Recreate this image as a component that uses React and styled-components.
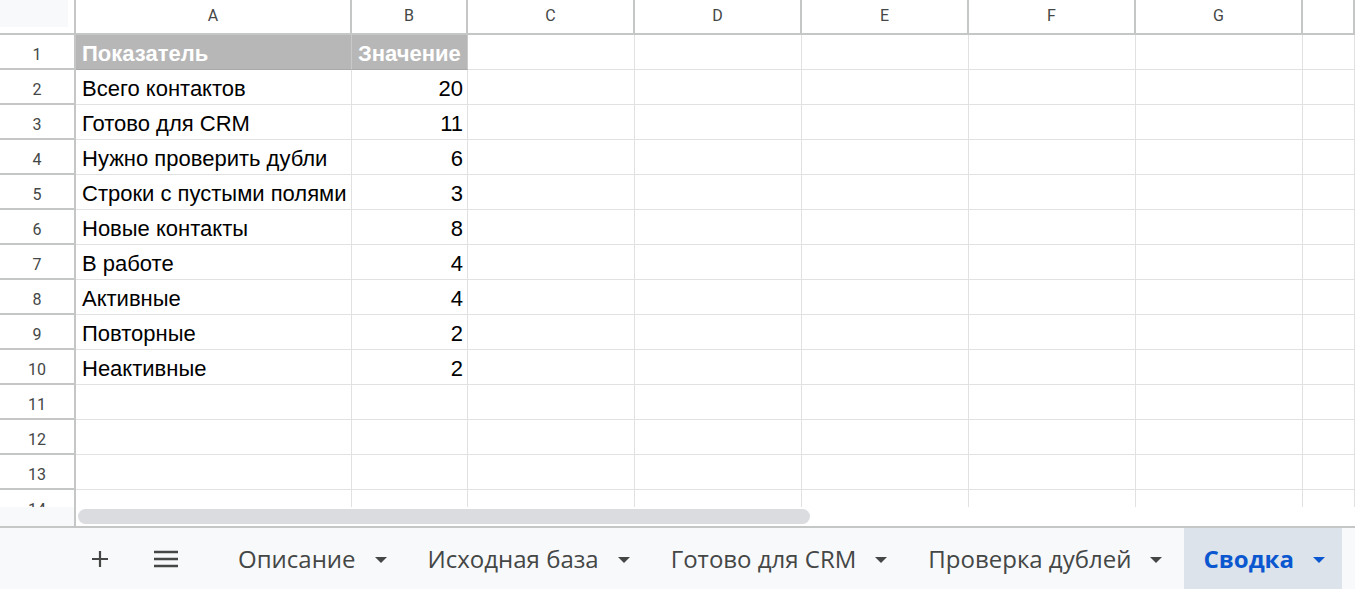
import React from "react";
import styled, { createGlobalStyle } from "styled-components";

const GlobalStyle = createGlobalStyle`
  html, body {
    margin: 0;
    padding: 0;
    background: #ffffff;
    overflow: hidden;
  }
  * { box-sizing: border-box; }
`;

const columns = ["A", "B", "C", "D", "E", "F", "G", ""];
const colTemplate = "76px 276px 116px 167px 167px 167px 167px 167px 1fr";

const rows = [
  ["Показатель", "Значение", true],
  ["Всего контактов", "20"],
  ["Готово для CRM", "11"],
  ["Нужно проверить дубли", "6"],
  ["Строки с пустыми полями", "3"],
  ["Новые контакты", "8"],
  ["В работе", "4"],
  ["Активные", "4"],
  ["Повторные", "2"],
  ["Неактивные", "2"],
  ["", ""],
  ["", ""],
  ["", ""],
  ["", ""],
];

const tabs = [
  { name: "Описание" },
  { name: "Исходная база" },
  { name: "Готово для CRM" },
  { name: "Проверка дублей" },
  { name: "Сводка", active: true },
];

export default function App() {
  return (
    <Page>
      <GlobalStyle />
      <Grid>
        <Row>
          <Corner>
            <CornerBox />
          </Corner>
          {columns.map((c, i) => (
            <ColHeader key={i}>{c}</ColHeader>
          ))}
        </Row>
        {rows.map(([label, value, head], i) => (
          <Row key={i}>
            <RowHeader>{i + 1}</RowHeader>
            <Cell $head={head}>{label}</Cell>
            <Cell $head={head} $right={!head}>
              {value}
            </Cell>
            {columns.slice(2).map((_, j) => (
              <Cell key={j} />
            ))}
          </Row>
        ))}
      </Grid>
      <ScrollRow>
        <ScrollGutter />
        <ScrollTrack>
          <Thumb />
        </ScrollTrack>
      </ScrollRow>
      <TabBar>
        <IconButton aria-label="Добавить лист">
          <svg width="20" height="20" viewBox="0 0 20 20">
            <path d="M10 2v16M2 10h16" stroke="#444746" strokeWidth="2.2" fill="none" />
          </svg>
        </IconButton>
        <IconButton aria-label="Все листы">
          <svg width="26" height="20" viewBox="0 0 26 20">
            <path d="M1 3h24M1 10h24M1 17h24" stroke="#444746" strokeWidth="2.4" fill="none" />
          </svg>
        </IconButton>
        <Tabs>
          {tabs.map((t) => (
            <Tab key={t.name} $active={t.active}>
              {t.name}
              <Caret $active={t.active} />
            </Tab>
          ))}
        </Tabs>
      </TabBar>
    </Page>
  );
}

const Page = styled.div`
  width: 1355px;
  height: 589px;
  display: flex;
  flex-direction: column;
  background: #ffffff;
  font-family: "Liberation Sans", Arial, sans-serif;
`;

const Grid = styled.div`
  height: 507px;
  overflow: hidden;
  display: flex;
  flex-direction: column;
`;

const Row = styled.div`
  display: grid;
  grid-template-columns: ${colTemplate};
  height: 35px;
  flex-shrink: 0;
`;

const Corner = styled.div`
  background: #ffffff;
  border-right: 2px solid #c4c7c5;
  border-bottom: 2px solid #c4c7c5;
  padding: 0 6px 6px 0;
`;

const CornerBox = styled.div`
  width: 100%;
  height: 100%;
  background: #f8f9fa;
`;

const ColHeader = styled.div`
  display: flex;
  align-items: center;
  justify-content: center;
  padding-bottom: 3px;
  background: #ffffff;
  border-right: 2px solid #c4c7c5;
  border-bottom: 2px solid #c4c7c5;
  color: #444746;
  font-family: Roboto, "Liberation Sans", sans-serif;
  font-size: 16px;
`;

const RowHeader = styled.div`
  display: flex;
  align-items: center;
  justify-content: center;
  padding-top: 5px;
  background: #ffffff;
  border-right: 2px solid #c4c7c5;
  border-bottom: 2px solid #c4c7c5;
  color: #444746;
  font-family: Roboto, "Liberation Sans", sans-serif;
  font-size: 16px;
`;

const Cell = styled.div`
  display: flex;
  align-items: center;
  justify-content: ${(p) => (p.$right ? "flex-end" : "flex-start")};
  padding: 3px 4px 0 6px;
  border-right: 1px solid ${(p) => (p.$head ? "#c9c9c9" : "#e1e1e1")};
  border-bottom: 1px solid ${(p) => (p.$head ? "#a9a9a9" : "#e1e1e1")};
  background: ${(p) => (p.$head ? "#b7b7b7" : "#ffffff")};
  color: ${(p) => (p.$head ? "#ffffff" : "#000000")};
  font-weight: ${(p) => (p.$head ? 700 : 400)};
  font-size: 22px;
  white-space: nowrap;
  overflow: hidden;
`;

const ScrollRow = styled.div`
  display: flex;
  height: 21px;
  border-bottom: 2px solid #c4c7c5;
`;

const ScrollGutter = styled.div`
  width: 76px;
  background: #f8f9fa;
  border-right: 2px solid #c4c7c5;
`;

const ScrollTrack = styled.div`
  flex: 1;
  display: flex;
  align-items: center;
  padding-left: 2px;
`;

const Thumb = styled.div`
  width: 732px;
  height: 15px;
  border-radius: 8px;
  background: #dadce0;
`;

const TabBar = styled.div`
  flex: 1;
  display: flex;
  align-items: stretch;
  background: #f8f9fb;
  padding-left: 80px;
`;

const IconButton = styled.button`
  width: 40px;
  margin-right: 26px;
  border: none;
  background: transparent;
  display: flex;
  align-items: center;
  justify-content: center;
  padding: 0;
`;

const Tabs = styled.div`
  display: flex;
  margin-left: 7px;
  gap: 5px;
`;

const Tab = styled.div`
  display: flex;
  align-items: center;
  gap: 19px;
  padding: 0 17px 0 19px;
  background: ${(p) => (p.$active ? "#dde3ea" : "transparent")};
  color: ${(p) => (p.$active ? "#0b57d0" : "#444746")};
  font-family: "Open Sans", Roboto, sans-serif;
  font-weight: ${(p) => (p.$active ? 700 : 500)};
  font-size: 24px;
  line-height: 1;
`;

const Caret = styled.span`
  width: 0;
  height: 0;
  margin-top: 2px;
  border-left: 6px solid transparent;
  border-right: 6px solid transparent;
  border-top: 6px solid ${(p) => (p.$active ? "#0b57d0" : "#444746")};
`;
